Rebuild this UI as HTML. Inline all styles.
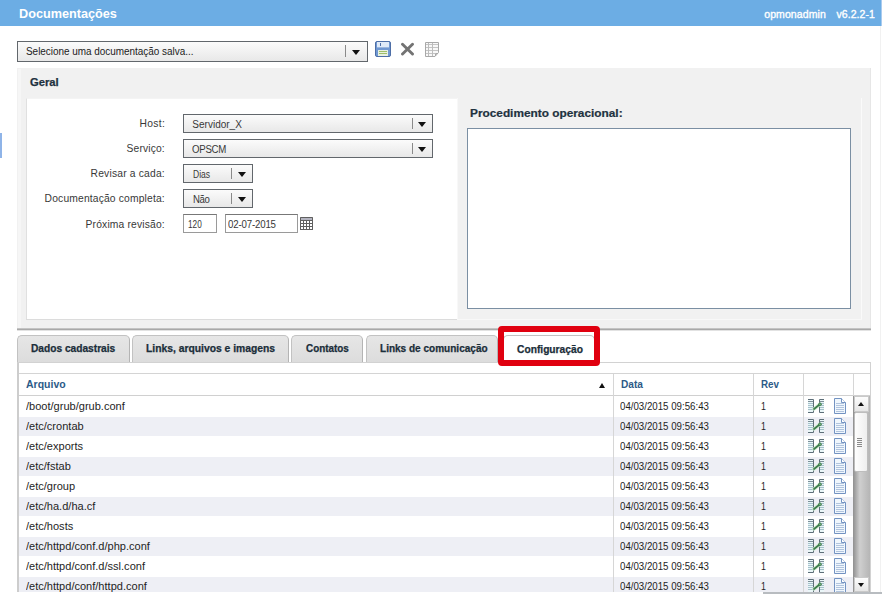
<!DOCTYPE html>
<html><head><meta charset="utf-8">
<style>
*{margin:0;padding:0;box-sizing:border-box}
html,body{width:882px;height:594px;overflow:hidden;background:#fff;font-family:"Liberation Sans",sans-serif;font-size:11px;color:#222}
.a{position:absolute}
.tx{position:absolute;white-space:nowrap;transform-origin:0 0}
.sel{position:absolute;background:linear-gradient(#fbfbfb,#e8e8e8);border:1px solid #62676c}
.sep{position:absolute;width:1px;background:#8a8a8a}
.arr{position:absolute;width:0;height:0;border-left:4px solid transparent;border-right:4px solid transparent;border-top:5px solid #111}
.arru{position:absolute;width:0;height:0;border-left:4px solid transparent;border-right:4px solid transparent;border-bottom:5px solid #111}
.inp{position:absolute;background:#fff;border:1px solid #9a9a9a;border-top-color:#777}
.tab{position:absolute;top:335px;height:28px;border:1px solid #c2c2c2;border-right-color:#b4b4b4;border-bottom:none;border-radius:5px 5px 0 0;background:linear-gradient(#e6e6e6,#dcdcdc)}
.vl{position:absolute;width:1px;background:#d6d6d6}
</style></head><body>
<div class="a" style="left:0;top:0;width:881px;height:26px;background:#6cade4"></div>
<div class="a" style="left:881px;top:0;width:1px;height:26px;background:#a9cbef"></div>
<div class="a" style="left:880px;top:26px;width:1px;height:568px;background:#f1f1f1"></div>

<!-- saved docs select -->
<div class="sel" style="left:17px;top:41px;width:351px;height:21px"></div>
<div class="sep" style="left:345px;top:45px;height:12px"></div>
<div class="arr" style="left:352px;top:50px"></div>
<!-- save icon -->
<svg class="a" style="left:375px;top:41px" width="16" height="16" viewBox="0 0 16 16">
  <rect x="0.5" y="0.5" width="15" height="15" rx="1.5" fill="#7098d2" stroke="#4d6ea6"/>
  <rect x="2" y="1" width="12" height="5" fill="#dfeaf8"/>
  <rect x="5" y="2" width="1" height="3" fill="#4d6ea6"/>
  <rect x="2" y="6" width="12" height="1" fill="#9ab6de"/>
  <rect x="3" y="9" width="10" height="6" fill="#e8f0e0"/>
  <rect x="4" y="10" width="8" height="1" fill="#9fbf6a"/>
  <rect x="4" y="12" width="8" height="1" fill="#9fbf6a"/>
</svg>
<!-- X icon -->
<svg class="a" style="left:400px;top:42px" width="15" height="14" viewBox="0 0 15 14">
  <path d="M2.5 2.2 L12.5 12 M12.5 2.2 L2.5 12" stroke="#737373" stroke-width="2.9" stroke-linecap="round"/>
</svg>
<!-- table icon -->
<svg class="a" style="left:424px;top:41px" width="16" height="16" viewBox="0 0 16 16">
  <path d="M1.5 1.5 H14.5 V11.5 L11 15.5 H1.5 Z" fill="#f8f8f8" stroke="#a8a8a8"/>
  <path d="M2 3.5 H14 M2 6.5 H14 M2 9.5 H14 M2 12.5 H11" stroke="#c4c4c4" stroke-width="1"/>
  <path d="M8.5 2 V15 M4.5 2 V15" stroke="#bcbcbc" stroke-width="1"/>
  <path d="M11.5 15 V12.5 H14" fill="none" stroke="#a8a8a8"/>
</svg>

<!-- Geral panel -->
<div class="a" style="left:17px;top:68px;width:854px;height:261px;background:#f1f1f1;border-right:1px solid #e6e6e6"></div>
<div class="a" style="left:18px;top:69px;width:3px;height:259px;background:#f6f6f6"></div>
<div class="a" style="left:17px;top:328px;width:854px;height:1px;background:#c4c4c4"></div>
<div class="a" style="left:17px;top:329px;width:854px;height:1px;background:#a9a9a9"></div>
<div class="a" style="left:17px;top:330px;width:854px;height:1px;background:#e2e2e2"></div>
<div class="a" style="left:26px;top:98px;width:432px;height:221px;background:#fff;border-left:1px solid #e0e0e0;border-top:1px solid #f4f4f4"></div>
<div class="a" style="left:26px;top:319px;width:432px;height:1px;background:#dcdcdc"></div>
<div class="a" style="left:457px;top:98px;width:405px;height:221px;background:#f1f1f1;border-left:1px solid #f8f8f8;border-right:1px solid #fafafa"></div>
<div class="a" style="left:457px;top:319px;width:405px;height:1px;background:#f8f8f8"></div>
<div class="a" style="left:467px;top:128px;width:384px;height:181px;background:#fff;border:1px solid #7b8fa3"></div>

<!-- form controls -->
<div class="sel" style="left:183px;top:114px;width:250px;height:19px"></div>
<div class="sep" style="left:412px;top:118px;height:11px"></div>
<div class="arr" style="left:418px;top:122px"></div>
<div class="sel" style="left:183px;top:139px;width:250px;height:19px"></div>
<div class="sep" style="left:412px;top:143px;height:11px"></div>
<div class="arr" style="left:418px;top:147px"></div>
<div class="sel" style="left:183px;top:164px;width:70px;height:19px"></div>
<div class="sep" style="left:231px;top:168px;height:11px"></div>
<div class="arr" style="left:238px;top:172px"></div>
<div class="sel" style="left:183px;top:189px;width:70px;height:19px"></div>
<div class="sep" style="left:231px;top:193px;height:11px"></div>
<div class="arr" style="left:238px;top:197px"></div>
<div class="inp" style="left:183px;top:214px;width:34px;height:19px"></div>
<div class="inp" style="left:225px;top:214px;width:73px;height:19px"></div>
<!-- calendar icon -->
<svg class="a" style="left:300px;top:217px" width="13" height="13" viewBox="0 0 13 13">
  <rect x="0" y="0" width="13" height="13" rx="0.5" fill="#606060"/>
  <rect x="1" y="1" width="11" height="2" fill="#b4b4c0"/>
  <rect x="1" y="4" width="2" height="2" fill="#fff"/><rect x="4" y="4" width="2" height="2" fill="#fff"/><rect x="7" y="4" width="2" height="2" fill="#fff"/><rect x="10" y="4" width="2" height="2" fill="#fff"/><rect x="1" y="7" width="2" height="2" fill="#fff"/><rect x="4" y="7" width="2" height="2" fill="#fff"/><rect x="7" y="7" width="2" height="2" fill="#fff"/><rect x="10" y="7" width="2" height="2" fill="#fff"/><rect x="1" y="10" width="2" height="2" fill="#fff"/><rect x="4" y="10" width="2" height="2" fill="#fff"/><rect x="7" y="10" width="2" height="2" fill="#fff"/><rect x="10" y="10" width="2" height="2" fill="#fff"/>
</svg>

<!-- left edge marker -->
<div class="a" style="left:0;top:133px;width:2px;height:25px;background:#8fb4e8"></div>

<!-- tabs -->
<div class="tab" style="left:17px;width:113px"></div>
<div class="tab" style="left:132px;width:157px"></div>
<div class="tab" style="left:291px;width:72px"></div>
<div class="tab" style="left:366px;width:132px"></div>
<div class="tab" style="left:503px;width:92px;background:#fff;height:29px"></div>
<div class="a" style="left:498px;top:326px;width:102px;height:40px;border:6px solid #e0000f;border-radius:4px;z-index:5"></div>

<!-- table -->
<div class="a" style="left:17px;top:362px;width:854px;height:230px;border:1px solid #d2d2d2;border-left:2px solid #cdcdcd;border-bottom:none;background:#fff"></div>
<div class="a" style="left:19px;top:373px;width:851px;height:1px;background:#d4d4d4"></div>
<div class="a" style="left:19px;top:395px;width:851px;height:1px;background:#d0d0d0"></div>
<div class="a" style="left:599px;top:383px;width:0;height:0;border-left:3.5px solid transparent;border-right:3.5px solid transparent;border-bottom:5px solid #111"></div>

<div class="a" style="left:19px;top:417px;width:834px;height:19px;background:#eeeff5"></div>
<div class="a" style="left:19px;top:457px;width:834px;height:19px;background:#eeeff5"></div>
<div class="a" style="left:19px;top:497px;width:834px;height:19px;background:#eeeff5"></div>
<div class="a" style="left:19px;top:537px;width:834px;height:19px;background:#eeeff5"></div>
<div class="a" style="left:19px;top:577px;width:834px;height:15px;background:#eeeff5"></div>
<div class="tx" style="left:26.10px;top:399.30px;font-size:11px;line-height:14px;font-weight:normal;color:#1e1e1e;transform:scaleX(1.0030);">/boot/grub/grub.conf</div>
<div class="tx" style="left:620.20px;top:399.30px;font-size:11px;line-height:14px;font-weight:normal;color:#1e1e1e;transform:scaleX(0.8809);">04/03/2015 09:56:43</div>
<div class="tx" style="left:760.50px;top:399.30px;font-size:11px;line-height:14px;font-weight:normal;color:#1e1e1e;transform:scaleX(0.8000);">1</div>
<svg class="a" style="left:807px;top:399px" width="18" height="15" viewBox="0 0 18 15"><rect x="1" y="1" width="5" height="12" fill="#eaf6f8"/>
   <rect x="13" y="1" width="4" height="12" fill="#eaf6f8"/>
   <path d="M1 2.5 H6" stroke="#7d8f98" stroke-width="1"/>
   <path d="M1 4.5 H6 M1 6.5 H6 M1 8.5 H6 M1 10.5 H6" stroke="#a6c2cc" stroke-width="1"/>
   <path d="M1 0.5 H6.5 V13.5 H1" fill="none" stroke="#5d6e78" stroke-width="1"/>
   <path d="M13 2.5 H17" stroke="#7d8f98" stroke-width="1"/>
   <path d="M13 4.5 H17 M13 6.5 H17 M13 8.5 H17 M13 10.5 H17" stroke="#a6c2cc" stroke-width="1"/>
   <path d="M17 0.5 H12.5 V13.5 H17" fill="none" stroke="#5d6e78" stroke-width="1"/>
   <path d="M7 10 L12.8 5.4" fill="none" stroke="#c8e8c8" stroke-width="3.4" stroke-linecap="round"/>
   <path d="M7 10 L12.8 5.4" fill="none" stroke="#3c7a4c" stroke-width="1.7" stroke-linecap="round"/>
   <circle cx="13" cy="5.3" r="1.7" fill="#3c7a4c"/>
   <circle cx="13" cy="5.3" r="0.7" fill="#9fd09f"/></svg>
<svg class="a" style="left:834px;top:398px" width="13" height="16" viewBox="0 0 13 16"><path d="M0.5 0.5 H7.5 L11.5 4.5 V15.5 H0.5 Z" fill="#f0f7fd" stroke="#7393c2"/>
   <path d="M7.5 0.5 V4.5 H11.5" fill="#fff" stroke="#7393c2"/>
   <path d="M2 5.5 H10 M2 7.5 H10 M2 9.5 H10 M2 11.5 H10 M2 13.5 H10" stroke="#b1c4de" stroke-width="1"/></svg>
<div class="tx" style="left:26.10px;top:419.30px;font-size:11px;line-height:14px;font-weight:normal;color:#1e1e1e;transform:scaleX(1.0030);">/etc/crontab</div>
<div class="tx" style="left:620.20px;top:419.30px;font-size:11px;line-height:14px;font-weight:normal;color:#1e1e1e;transform:scaleX(0.8809);">04/03/2015 09:56:43</div>
<div class="tx" style="left:760.50px;top:419.30px;font-size:11px;line-height:14px;font-weight:normal;color:#1e1e1e;transform:scaleX(0.8000);">1</div>
<svg class="a" style="left:807px;top:419px" width="18" height="15" viewBox="0 0 18 15"><rect x="1" y="1" width="5" height="12" fill="#eaf6f8"/>
   <rect x="13" y="1" width="4" height="12" fill="#eaf6f8"/>
   <path d="M1 2.5 H6" stroke="#7d8f98" stroke-width="1"/>
   <path d="M1 4.5 H6 M1 6.5 H6 M1 8.5 H6 M1 10.5 H6" stroke="#a6c2cc" stroke-width="1"/>
   <path d="M1 0.5 H6.5 V13.5 H1" fill="none" stroke="#5d6e78" stroke-width="1"/>
   <path d="M13 2.5 H17" stroke="#7d8f98" stroke-width="1"/>
   <path d="M13 4.5 H17 M13 6.5 H17 M13 8.5 H17 M13 10.5 H17" stroke="#a6c2cc" stroke-width="1"/>
   <path d="M17 0.5 H12.5 V13.5 H17" fill="none" stroke="#5d6e78" stroke-width="1"/>
   <path d="M7 10 L12.8 5.4" fill="none" stroke="#c8e8c8" stroke-width="3.4" stroke-linecap="round"/>
   <path d="M7 10 L12.8 5.4" fill="none" stroke="#3c7a4c" stroke-width="1.7" stroke-linecap="round"/>
   <circle cx="13" cy="5.3" r="1.7" fill="#3c7a4c"/>
   <circle cx="13" cy="5.3" r="0.7" fill="#9fd09f"/></svg>
<svg class="a" style="left:834px;top:418px" width="13" height="16" viewBox="0 0 13 16"><path d="M0.5 0.5 H7.5 L11.5 4.5 V15.5 H0.5 Z" fill="#f0f7fd" stroke="#7393c2"/>
   <path d="M7.5 0.5 V4.5 H11.5" fill="#fff" stroke="#7393c2"/>
   <path d="M2 5.5 H10 M2 7.5 H10 M2 9.5 H10 M2 11.5 H10 M2 13.5 H10" stroke="#b1c4de" stroke-width="1"/></svg>
<div class="tx" style="left:26.10px;top:439.30px;font-size:11px;line-height:14px;font-weight:normal;color:#1e1e1e;transform:scaleX(1.0030);">/etc/exports</div>
<div class="tx" style="left:620.20px;top:439.30px;font-size:11px;line-height:14px;font-weight:normal;color:#1e1e1e;transform:scaleX(0.8809);">04/03/2015 09:56:43</div>
<div class="tx" style="left:760.50px;top:439.30px;font-size:11px;line-height:14px;font-weight:normal;color:#1e1e1e;transform:scaleX(0.8000);">1</div>
<svg class="a" style="left:807px;top:439px" width="18" height="15" viewBox="0 0 18 15"><rect x="1" y="1" width="5" height="12" fill="#eaf6f8"/>
   <rect x="13" y="1" width="4" height="12" fill="#eaf6f8"/>
   <path d="M1 2.5 H6" stroke="#7d8f98" stroke-width="1"/>
   <path d="M1 4.5 H6 M1 6.5 H6 M1 8.5 H6 M1 10.5 H6" stroke="#a6c2cc" stroke-width="1"/>
   <path d="M1 0.5 H6.5 V13.5 H1" fill="none" stroke="#5d6e78" stroke-width="1"/>
   <path d="M13 2.5 H17" stroke="#7d8f98" stroke-width="1"/>
   <path d="M13 4.5 H17 M13 6.5 H17 M13 8.5 H17 M13 10.5 H17" stroke="#a6c2cc" stroke-width="1"/>
   <path d="M17 0.5 H12.5 V13.5 H17" fill="none" stroke="#5d6e78" stroke-width="1"/>
   <path d="M7 10 L12.8 5.4" fill="none" stroke="#c8e8c8" stroke-width="3.4" stroke-linecap="round"/>
   <path d="M7 10 L12.8 5.4" fill="none" stroke="#3c7a4c" stroke-width="1.7" stroke-linecap="round"/>
   <circle cx="13" cy="5.3" r="1.7" fill="#3c7a4c"/>
   <circle cx="13" cy="5.3" r="0.7" fill="#9fd09f"/></svg>
<svg class="a" style="left:834px;top:438px" width="13" height="16" viewBox="0 0 13 16"><path d="M0.5 0.5 H7.5 L11.5 4.5 V15.5 H0.5 Z" fill="#f0f7fd" stroke="#7393c2"/>
   <path d="M7.5 0.5 V4.5 H11.5" fill="#fff" stroke="#7393c2"/>
   <path d="M2 5.5 H10 M2 7.5 H10 M2 9.5 H10 M2 11.5 H10 M2 13.5 H10" stroke="#b1c4de" stroke-width="1"/></svg>
<div class="tx" style="left:26.10px;top:459.30px;font-size:11px;line-height:14px;font-weight:normal;color:#1e1e1e;transform:scaleX(1.0030);">/etc/fstab</div>
<div class="tx" style="left:620.20px;top:459.30px;font-size:11px;line-height:14px;font-weight:normal;color:#1e1e1e;transform:scaleX(0.8809);">04/03/2015 09:56:43</div>
<div class="tx" style="left:760.50px;top:459.30px;font-size:11px;line-height:14px;font-weight:normal;color:#1e1e1e;transform:scaleX(0.8000);">1</div>
<svg class="a" style="left:807px;top:459px" width="18" height="15" viewBox="0 0 18 15"><rect x="1" y="1" width="5" height="12" fill="#eaf6f8"/>
   <rect x="13" y="1" width="4" height="12" fill="#eaf6f8"/>
   <path d="M1 2.5 H6" stroke="#7d8f98" stroke-width="1"/>
   <path d="M1 4.5 H6 M1 6.5 H6 M1 8.5 H6 M1 10.5 H6" stroke="#a6c2cc" stroke-width="1"/>
   <path d="M1 0.5 H6.5 V13.5 H1" fill="none" stroke="#5d6e78" stroke-width="1"/>
   <path d="M13 2.5 H17" stroke="#7d8f98" stroke-width="1"/>
   <path d="M13 4.5 H17 M13 6.5 H17 M13 8.5 H17 M13 10.5 H17" stroke="#a6c2cc" stroke-width="1"/>
   <path d="M17 0.5 H12.5 V13.5 H17" fill="none" stroke="#5d6e78" stroke-width="1"/>
   <path d="M7 10 L12.8 5.4" fill="none" stroke="#c8e8c8" stroke-width="3.4" stroke-linecap="round"/>
   <path d="M7 10 L12.8 5.4" fill="none" stroke="#3c7a4c" stroke-width="1.7" stroke-linecap="round"/>
   <circle cx="13" cy="5.3" r="1.7" fill="#3c7a4c"/>
   <circle cx="13" cy="5.3" r="0.7" fill="#9fd09f"/></svg>
<svg class="a" style="left:834px;top:458px" width="13" height="16" viewBox="0 0 13 16"><path d="M0.5 0.5 H7.5 L11.5 4.5 V15.5 H0.5 Z" fill="#f0f7fd" stroke="#7393c2"/>
   <path d="M7.5 0.5 V4.5 H11.5" fill="#fff" stroke="#7393c2"/>
   <path d="M2 5.5 H10 M2 7.5 H10 M2 9.5 H10 M2 11.5 H10 M2 13.5 H10" stroke="#b1c4de" stroke-width="1"/></svg>
<div class="tx" style="left:26.10px;top:479.30px;font-size:11px;line-height:14px;font-weight:normal;color:#1e1e1e;transform:scaleX(1.0030);">/etc/group</div>
<div class="tx" style="left:620.20px;top:479.30px;font-size:11px;line-height:14px;font-weight:normal;color:#1e1e1e;transform:scaleX(0.8809);">04/03/2015 09:56:43</div>
<div class="tx" style="left:760.50px;top:479.30px;font-size:11px;line-height:14px;font-weight:normal;color:#1e1e1e;transform:scaleX(0.8000);">1</div>
<svg class="a" style="left:807px;top:479px" width="18" height="15" viewBox="0 0 18 15"><rect x="1" y="1" width="5" height="12" fill="#eaf6f8"/>
   <rect x="13" y="1" width="4" height="12" fill="#eaf6f8"/>
   <path d="M1 2.5 H6" stroke="#7d8f98" stroke-width="1"/>
   <path d="M1 4.5 H6 M1 6.5 H6 M1 8.5 H6 M1 10.5 H6" stroke="#a6c2cc" stroke-width="1"/>
   <path d="M1 0.5 H6.5 V13.5 H1" fill="none" stroke="#5d6e78" stroke-width="1"/>
   <path d="M13 2.5 H17" stroke="#7d8f98" stroke-width="1"/>
   <path d="M13 4.5 H17 M13 6.5 H17 M13 8.5 H17 M13 10.5 H17" stroke="#a6c2cc" stroke-width="1"/>
   <path d="M17 0.5 H12.5 V13.5 H17" fill="none" stroke="#5d6e78" stroke-width="1"/>
   <path d="M7 10 L12.8 5.4" fill="none" stroke="#c8e8c8" stroke-width="3.4" stroke-linecap="round"/>
   <path d="M7 10 L12.8 5.4" fill="none" stroke="#3c7a4c" stroke-width="1.7" stroke-linecap="round"/>
   <circle cx="13" cy="5.3" r="1.7" fill="#3c7a4c"/>
   <circle cx="13" cy="5.3" r="0.7" fill="#9fd09f"/></svg>
<svg class="a" style="left:834px;top:478px" width="13" height="16" viewBox="0 0 13 16"><path d="M0.5 0.5 H7.5 L11.5 4.5 V15.5 H0.5 Z" fill="#f0f7fd" stroke="#7393c2"/>
   <path d="M7.5 0.5 V4.5 H11.5" fill="#fff" stroke="#7393c2"/>
   <path d="M2 5.5 H10 M2 7.5 H10 M2 9.5 H10 M2 11.5 H10 M2 13.5 H10" stroke="#b1c4de" stroke-width="1"/></svg>
<div class="tx" style="left:26.10px;top:499.30px;font-size:11px;line-height:14px;font-weight:normal;color:#1e1e1e;transform:scaleX(1.0030);">/etc/ha.d/ha.cf</div>
<div class="tx" style="left:620.20px;top:499.30px;font-size:11px;line-height:14px;font-weight:normal;color:#1e1e1e;transform:scaleX(0.8809);">04/03/2015 09:56:43</div>
<div class="tx" style="left:760.50px;top:499.30px;font-size:11px;line-height:14px;font-weight:normal;color:#1e1e1e;transform:scaleX(0.8000);">1</div>
<svg class="a" style="left:807px;top:499px" width="18" height="15" viewBox="0 0 18 15"><rect x="1" y="1" width="5" height="12" fill="#eaf6f8"/>
   <rect x="13" y="1" width="4" height="12" fill="#eaf6f8"/>
   <path d="M1 2.5 H6" stroke="#7d8f98" stroke-width="1"/>
   <path d="M1 4.5 H6 M1 6.5 H6 M1 8.5 H6 M1 10.5 H6" stroke="#a6c2cc" stroke-width="1"/>
   <path d="M1 0.5 H6.5 V13.5 H1" fill="none" stroke="#5d6e78" stroke-width="1"/>
   <path d="M13 2.5 H17" stroke="#7d8f98" stroke-width="1"/>
   <path d="M13 4.5 H17 M13 6.5 H17 M13 8.5 H17 M13 10.5 H17" stroke="#a6c2cc" stroke-width="1"/>
   <path d="M17 0.5 H12.5 V13.5 H17" fill="none" stroke="#5d6e78" stroke-width="1"/>
   <path d="M7 10 L12.8 5.4" fill="none" stroke="#c8e8c8" stroke-width="3.4" stroke-linecap="round"/>
   <path d="M7 10 L12.8 5.4" fill="none" stroke="#3c7a4c" stroke-width="1.7" stroke-linecap="round"/>
   <circle cx="13" cy="5.3" r="1.7" fill="#3c7a4c"/>
   <circle cx="13" cy="5.3" r="0.7" fill="#9fd09f"/></svg>
<svg class="a" style="left:834px;top:498px" width="13" height="16" viewBox="0 0 13 16"><path d="M0.5 0.5 H7.5 L11.5 4.5 V15.5 H0.5 Z" fill="#f0f7fd" stroke="#7393c2"/>
   <path d="M7.5 0.5 V4.5 H11.5" fill="#fff" stroke="#7393c2"/>
   <path d="M2 5.5 H10 M2 7.5 H10 M2 9.5 H10 M2 11.5 H10 M2 13.5 H10" stroke="#b1c4de" stroke-width="1"/></svg>
<div class="tx" style="left:26.10px;top:519.30px;font-size:11px;line-height:14px;font-weight:normal;color:#1e1e1e;transform:scaleX(1.0030);">/etc/hosts</div>
<div class="tx" style="left:620.20px;top:519.30px;font-size:11px;line-height:14px;font-weight:normal;color:#1e1e1e;transform:scaleX(0.8809);">04/03/2015 09:56:43</div>
<div class="tx" style="left:760.50px;top:519.30px;font-size:11px;line-height:14px;font-weight:normal;color:#1e1e1e;transform:scaleX(0.8000);">1</div>
<svg class="a" style="left:807px;top:519px" width="18" height="15" viewBox="0 0 18 15"><rect x="1" y="1" width="5" height="12" fill="#eaf6f8"/>
   <rect x="13" y="1" width="4" height="12" fill="#eaf6f8"/>
   <path d="M1 2.5 H6" stroke="#7d8f98" stroke-width="1"/>
   <path d="M1 4.5 H6 M1 6.5 H6 M1 8.5 H6 M1 10.5 H6" stroke="#a6c2cc" stroke-width="1"/>
   <path d="M1 0.5 H6.5 V13.5 H1" fill="none" stroke="#5d6e78" stroke-width="1"/>
   <path d="M13 2.5 H17" stroke="#7d8f98" stroke-width="1"/>
   <path d="M13 4.5 H17 M13 6.5 H17 M13 8.5 H17 M13 10.5 H17" stroke="#a6c2cc" stroke-width="1"/>
   <path d="M17 0.5 H12.5 V13.5 H17" fill="none" stroke="#5d6e78" stroke-width="1"/>
   <path d="M7 10 L12.8 5.4" fill="none" stroke="#c8e8c8" stroke-width="3.4" stroke-linecap="round"/>
   <path d="M7 10 L12.8 5.4" fill="none" stroke="#3c7a4c" stroke-width="1.7" stroke-linecap="round"/>
   <circle cx="13" cy="5.3" r="1.7" fill="#3c7a4c"/>
   <circle cx="13" cy="5.3" r="0.7" fill="#9fd09f"/></svg>
<svg class="a" style="left:834px;top:518px" width="13" height="16" viewBox="0 0 13 16"><path d="M0.5 0.5 H7.5 L11.5 4.5 V15.5 H0.5 Z" fill="#f0f7fd" stroke="#7393c2"/>
   <path d="M7.5 0.5 V4.5 H11.5" fill="#fff" stroke="#7393c2"/>
   <path d="M2 5.5 H10 M2 7.5 H10 M2 9.5 H10 M2 11.5 H10 M2 13.5 H10" stroke="#b1c4de" stroke-width="1"/></svg>
<div class="tx" style="left:26.10px;top:539.30px;font-size:11px;line-height:14px;font-weight:normal;color:#1e1e1e;transform:scaleX(1.0030);">/etc/httpd/conf.d/php.conf</div>
<div class="tx" style="left:620.20px;top:539.30px;font-size:11px;line-height:14px;font-weight:normal;color:#1e1e1e;transform:scaleX(0.8809);">04/03/2015 09:56:43</div>
<div class="tx" style="left:760.50px;top:539.30px;font-size:11px;line-height:14px;font-weight:normal;color:#1e1e1e;transform:scaleX(0.8000);">1</div>
<svg class="a" style="left:807px;top:539px" width="18" height="15" viewBox="0 0 18 15"><rect x="1" y="1" width="5" height="12" fill="#eaf6f8"/>
   <rect x="13" y="1" width="4" height="12" fill="#eaf6f8"/>
   <path d="M1 2.5 H6" stroke="#7d8f98" stroke-width="1"/>
   <path d="M1 4.5 H6 M1 6.5 H6 M1 8.5 H6 M1 10.5 H6" stroke="#a6c2cc" stroke-width="1"/>
   <path d="M1 0.5 H6.5 V13.5 H1" fill="none" stroke="#5d6e78" stroke-width="1"/>
   <path d="M13 2.5 H17" stroke="#7d8f98" stroke-width="1"/>
   <path d="M13 4.5 H17 M13 6.5 H17 M13 8.5 H17 M13 10.5 H17" stroke="#a6c2cc" stroke-width="1"/>
   <path d="M17 0.5 H12.5 V13.5 H17" fill="none" stroke="#5d6e78" stroke-width="1"/>
   <path d="M7 10 L12.8 5.4" fill="none" stroke="#c8e8c8" stroke-width="3.4" stroke-linecap="round"/>
   <path d="M7 10 L12.8 5.4" fill="none" stroke="#3c7a4c" stroke-width="1.7" stroke-linecap="round"/>
   <circle cx="13" cy="5.3" r="1.7" fill="#3c7a4c"/>
   <circle cx="13" cy="5.3" r="0.7" fill="#9fd09f"/></svg>
<svg class="a" style="left:834px;top:538px" width="13" height="16" viewBox="0 0 13 16"><path d="M0.5 0.5 H7.5 L11.5 4.5 V15.5 H0.5 Z" fill="#f0f7fd" stroke="#7393c2"/>
   <path d="M7.5 0.5 V4.5 H11.5" fill="#fff" stroke="#7393c2"/>
   <path d="M2 5.5 H10 M2 7.5 H10 M2 9.5 H10 M2 11.5 H10 M2 13.5 H10" stroke="#b1c4de" stroke-width="1"/></svg>
<div class="tx" style="left:26.10px;top:559.30px;font-size:11px;line-height:14px;font-weight:normal;color:#1e1e1e;transform:scaleX(1.0030);">/etc/httpd/conf.d/ssl.conf</div>
<div class="tx" style="left:620.20px;top:559.30px;font-size:11px;line-height:14px;font-weight:normal;color:#1e1e1e;transform:scaleX(0.8809);">04/03/2015 09:56:43</div>
<div class="tx" style="left:760.50px;top:559.30px;font-size:11px;line-height:14px;font-weight:normal;color:#1e1e1e;transform:scaleX(0.8000);">1</div>
<svg class="a" style="left:807px;top:559px" width="18" height="15" viewBox="0 0 18 15"><rect x="1" y="1" width="5" height="12" fill="#eaf6f8"/>
   <rect x="13" y="1" width="4" height="12" fill="#eaf6f8"/>
   <path d="M1 2.5 H6" stroke="#7d8f98" stroke-width="1"/>
   <path d="M1 4.5 H6 M1 6.5 H6 M1 8.5 H6 M1 10.5 H6" stroke="#a6c2cc" stroke-width="1"/>
   <path d="M1 0.5 H6.5 V13.5 H1" fill="none" stroke="#5d6e78" stroke-width="1"/>
   <path d="M13 2.5 H17" stroke="#7d8f98" stroke-width="1"/>
   <path d="M13 4.5 H17 M13 6.5 H17 M13 8.5 H17 M13 10.5 H17" stroke="#a6c2cc" stroke-width="1"/>
   <path d="M17 0.5 H12.5 V13.5 H17" fill="none" stroke="#5d6e78" stroke-width="1"/>
   <path d="M7 10 L12.8 5.4" fill="none" stroke="#c8e8c8" stroke-width="3.4" stroke-linecap="round"/>
   <path d="M7 10 L12.8 5.4" fill="none" stroke="#3c7a4c" stroke-width="1.7" stroke-linecap="round"/>
   <circle cx="13" cy="5.3" r="1.7" fill="#3c7a4c"/>
   <circle cx="13" cy="5.3" r="0.7" fill="#9fd09f"/></svg>
<svg class="a" style="left:834px;top:558px" width="13" height="16" viewBox="0 0 13 16"><path d="M0.5 0.5 H7.5 L11.5 4.5 V15.5 H0.5 Z" fill="#f0f7fd" stroke="#7393c2"/>
   <path d="M7.5 0.5 V4.5 H11.5" fill="#fff" stroke="#7393c2"/>
   <path d="M2 5.5 H10 M2 7.5 H10 M2 9.5 H10 M2 11.5 H10 M2 13.5 H10" stroke="#b1c4de" stroke-width="1"/></svg>
<div class="tx" style="left:26.10px;top:579.30px;font-size:11px;line-height:14px;font-weight:normal;color:#1e1e1e;transform:scaleX(1.0030);">/etc/httpd/conf/httpd.conf</div>
<div class="tx" style="left:620.20px;top:579.30px;font-size:11px;line-height:14px;font-weight:normal;color:#1e1e1e;transform:scaleX(0.8809);">04/03/2015 09:56:43</div>
<div class="tx" style="left:760.50px;top:579.30px;font-size:11px;line-height:14px;font-weight:normal;color:#1e1e1e;transform:scaleX(0.8000);">1</div>
<svg class="a" style="left:807px;top:579px" width="18" height="15" viewBox="0 0 18 15"><rect x="1" y="1" width="5" height="12" fill="#eaf6f8"/>
   <rect x="13" y="1" width="4" height="12" fill="#eaf6f8"/>
   <path d="M1 2.5 H6" stroke="#7d8f98" stroke-width="1"/>
   <path d="M1 4.5 H6 M1 6.5 H6 M1 8.5 H6 M1 10.5 H6" stroke="#a6c2cc" stroke-width="1"/>
   <path d="M1 0.5 H6.5 V13.5 H1" fill="none" stroke="#5d6e78" stroke-width="1"/>
   <path d="M13 2.5 H17" stroke="#7d8f98" stroke-width="1"/>
   <path d="M13 4.5 H17 M13 6.5 H17 M13 8.5 H17 M13 10.5 H17" stroke="#a6c2cc" stroke-width="1"/>
   <path d="M17 0.5 H12.5 V13.5 H17" fill="none" stroke="#5d6e78" stroke-width="1"/>
   <path d="M7 10 L12.8 5.4" fill="none" stroke="#c8e8c8" stroke-width="3.4" stroke-linecap="round"/>
   <path d="M7 10 L12.8 5.4" fill="none" stroke="#3c7a4c" stroke-width="1.7" stroke-linecap="round"/>
   <circle cx="13" cy="5.3" r="1.7" fill="#3c7a4c"/>
   <circle cx="13" cy="5.3" r="0.7" fill="#9fd09f"/></svg>
<svg class="a" style="left:834px;top:578px" width="13" height="16" viewBox="0 0 13 16"><path d="M0.5 0.5 H7.5 L11.5 4.5 V15.5 H0.5 Z" fill="#f0f7fd" stroke="#7393c2"/>
   <path d="M7.5 0.5 V4.5 H11.5" fill="#fff" stroke="#7393c2"/>
   <path d="M2 5.5 H10 M2 7.5 H10 M2 9.5 H10 M2 11.5 H10 M2 13.5 H10" stroke="#b1c4de" stroke-width="1"/></svg>

<!-- column lines -->
<div class="vl" style="left:613px;top:374px;height:218px"></div>
<div class="vl" style="left:753px;top:374px;height:218px"></div>
<div class="vl" style="left:803px;top:374px;height:218px"></div>
<div class="vl" style="left:853px;top:374px;height:22px"></div>
<!-- scrollbar -->
<div class="a" style="left:853px;top:396px;width:17px;height:196px;background:linear-gradient(90deg,#8f8f8f,#cfcfcf 40%,#b5b5b5)"></div>
<div class="a" style="left:854px;top:396px;width:15px;height:16px;background:linear-gradient(#fdfdfd,#e6e6e6);border:1px solid #c9c9c9"></div>
<div class="a" style="left:858px;top:402px;width:0;height:0;border-left:3.5px solid transparent;border-right:3.5px solid transparent;border-bottom:4px solid #111"></div>
<div class="a" style="left:854px;top:412px;width:14px;height:60px;background:linear-gradient(90deg,#fefefe,#eeeeee);border:1px solid #bdbdbd;border-radius:2px"></div>
<div class="a" style="left:857px;top:438px;width:5px;height:9px;background:repeating-linear-gradient(#8a8a8a 0 1px,transparent 1px 2px)"></div>
<div class="a" style="left:854px;top:577px;width:15px;height:15px;background:linear-gradient(#fdfdfd,#e6e6e6);border:1px solid #c9c9c9"></div>
<div class="a" style="left:858px;top:583px;width:0;height:0;border-left:3.5px solid transparent;border-right:3.5px solid transparent;border-top:4px solid #111"></div>
<div class="a" style="left:763px;top:592px;width:119px;height:2px;background:#b8bcc0"></div>

<div class="tx" style="left:18.80px;top:4.90px;font-size:13.7px;line-height:17px;font-weight:bold;color:#fff;transform:scaleX(0.9254);">Documentações</div>
<div class="tx" style="left:764.20px;top:7.70px;font-size:10.5px;line-height:13px;font-weight:normal;color:#fff;letter-spacing:0.104px;transform:scaleX(1.0000);-webkit-text-stroke:0.35px #fff;">opmonadmin</div>
<div class="tx" style="left:836.50px;top:7.70px;font-size:10.5px;line-height:13px;font-weight:normal;color:#fff;letter-spacing:0.057px;transform:scaleX(1.0000);-webkit-text-stroke:0.35px #fff;">v6.2.2-1</div>
<div class="tx" style="left:26.30px;top:46.00px;font-size:10px;line-height:12px;font-weight:normal;color:#222;letter-spacing:-0.022px;transform:scaleX(0.9955);">Selecione uma documentação salva...</div>
<div class="tx" style="left:29.60px;top:76.70px;font-size:10px;line-height:12px;font-weight:bold;color:#1e3240;transform:scaleX(1.1205);-webkit-text-stroke:0.25px #1e3240;">Geral</div>
<div class="tx" style="left:470.00px;top:106.80px;font-size:10.5px;line-height:13px;font-weight:bold;color:#1e3240;transform:scaleX(1.1271);-webkit-text-stroke:0.2px #1e3240;">Procedimento operacional:</div>
<div class="tx" style="left:139.50px;top:117.00px;font-size:10.3px;line-height:13px;font-weight:normal;color:#383838;letter-spacing:0.307px;transform:scaleX(1.0000);">Host:</div>
<div class="tx" style="left:126.60px;top:142.00px;font-size:10.3px;line-height:13px;font-weight:normal;color:#383838;letter-spacing:0.124px;transform:scaleX(1.0000);">Serviço:</div>
<div class="tx" style="left:90.60px;top:167.00px;font-size:10.3px;line-height:13px;font-weight:normal;color:#383838;letter-spacing:0.180px;transform:scaleX(1.0000);">Revisar a cada:</div>
<div class="tx" style="left:44.60px;top:192.00px;font-size:10.3px;line-height:13px;font-weight:normal;color:#383838;letter-spacing:0.157px;transform:scaleX(1.0000);">Documentação completa:</div>
<div class="tx" style="left:85.60px;top:217.50px;font-size:10.3px;line-height:13px;font-weight:normal;color:#383838;letter-spacing:0.159px;transform:scaleX(1.0000);">Próxima revisão:</div>
<div class="tx" style="left:192.30px;top:118.50px;font-size:10px;line-height:12px;font-weight:normal;color:#383838;letter-spacing:0.011px;transform:scaleX(1.0000);">Servidor_X</div>
<div class="tx" style="left:192.30px;top:143.60px;font-size:10px;line-height:12px;font-weight:normal;color:#383838;letter-spacing:-0.297px;transform:scaleX(0.9673);">OPSCM</div>
<div class="tx" style="left:192.70px;top:168.50px;font-size:10px;line-height:12px;font-weight:normal;color:#383838;transform:scaleX(0.8548);">Dias</div>
<div class="tx" style="left:192.70px;top:193.50px;font-size:10px;line-height:12px;font-weight:normal;color:#383838;letter-spacing:-0.378px;transform:scaleX(0.9597);">Não</div>
<div class="tx" style="left:187.60px;top:219.20px;font-size:10px;line-height:12px;font-weight:normal;color:#383838;transform:scaleX(0.8235);">120</div>
<div class="tx" style="left:228.40px;top:219.20px;font-size:10px;line-height:12px;font-weight:normal;color:#383838;letter-spacing:-0.180px;transform:scaleX(0.9686);">02-07-2015</div>
<div class="tx" style="left:31.30px;top:343.20px;font-size:10px;line-height:12px;font-weight:bold;color:#1b2e3a;transform:scaleX(1.0173);-webkit-text-stroke:0.25px #1b2e3a;">Dados cadastrais</div>
<div class="tx" style="left:146.00px;top:343.20px;font-size:10px;line-height:12px;font-weight:bold;color:#1b2e3a;transform:scaleX(1.0320);-webkit-text-stroke:0.25px #1b2e3a;">Links, arquivos e imagens</div>
<div class="tx" style="left:305.50px;top:343.20px;font-size:10px;line-height:12px;font-weight:bold;color:#1b2e3a;transform:scaleX(0.9870);-webkit-text-stroke:0.25px #1b2e3a;">Contatos</div>
<div class="tx" style="left:380.00px;top:343.20px;font-size:10px;line-height:12px;font-weight:bold;color:#1b2e3a;transform:scaleX(1.0033);-webkit-text-stroke:0.25px #1b2e3a;">Links de comunicação</div>
<div class="tx" style="left:517.20px;top:344.10px;font-size:10px;line-height:12px;font-weight:bold;color:#1b2e3a;transform:scaleX(1.0227);-webkit-text-stroke:0.25px #1b2e3a;">Configuração</div>
<div class="tx" style="left:26.30px;top:378.80px;font-size:10px;line-height:12px;font-weight:bold;color:#2b5a88;transform:scaleX(1.0486);">Arquivo</div>
<div class="tx" style="left:620.60px;top:378.80px;font-size:10px;line-height:12px;font-weight:bold;color:#2b5a88;transform:scaleX(1.0130);">Data</div>
<div class="tx" style="left:760.60px;top:378.80px;font-size:10px;line-height:12px;font-weight:bold;color:#2b5a88;transform:scaleX(0.9796);">Rev</div>

</body></html>
